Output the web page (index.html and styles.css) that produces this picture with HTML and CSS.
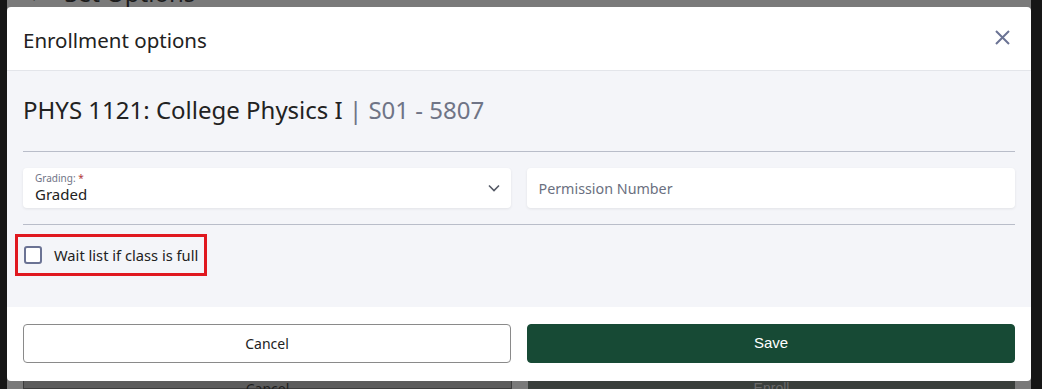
FILE: index.html
```html
<!DOCTYPE html>
<html lang="en">
<head>
    <meta charset="UTF-8">
    <meta name="viewport" content="width=device-width, initial-scale=1.0">
    <title>Enrollment options</title>
    <link rel="stylesheet" href="styles.css">
</head>
<body>

    <div class="backdrop">
        <div class="back-header">
            <span class="back-arrow">&lsaquo;</span>
            <span class="back-title">Set Options</span>
            <span class="back-close">&times;</span>
        </div>
        <div class="back-footer">
            <div class="back-btn back-cancel">Cancel</div>
            <div class="back-btn back-enroll">Enroll</div>
        </div>

        <div class="modal">
            <div class="modal-header">
                <h2>Enrollment options</h2>
                <button class="close-btn" aria-label="Close">
                    <svg width="15" height="15" viewBox="0 0 15 15">
                        <path d="M1 1 L14 14 M14 1 L1 14" stroke="#6b7394" stroke-width="2" fill="none" />
                    </svg>
                </button>
            </div>

            <div class="modal-body">
                <h3 class="course">PHYS 1121: College Physics I <span class="section">| S01 - 5807</span></h3>
                <hr class="divider">

                <div class="fields">
                    <div class="field select-field">
                        <div class="field-text">
                            <label class="field-label">Grading: <span class="req">*</span></label>
                            <div class="field-value">Graded</div>
                        </div>
                        <svg class="chevron" width="12" height="8" viewBox="0 0 12 8">
                            <polyline points="1,1.5 6,6.5 11,1.5" stroke="#555a66" stroke-width="1.6" fill="none" />
                        </svg>
                    </div>
                    <div class="field input-field">
                        <span class="placeholder">Permission Number</span>
                    </div>
                </div>

                <hr class="divider">

                <div class="waitlist">
                    <span class="checkbox"></span>
                    <span class="waitlist-label">Wait list if class is full</span>
                </div>
            </div>

            <div class="modal-footer">
                <button class="btn btn-cancel">Cancel</button>
                <button class="btn btn-save">Save</button>
            </div>
        </div>
    </div>

</body>
</html>
```

FILE: styles.css
```css
* {
    margin: 0;
    padding: 0;
    box-sizing: border-box;
}

body {
    font-family: "Noto Sans", Arial, sans-serif;
    background-color: #161616;
    height: 389px;
    overflow: hidden;
    color: #222;
}

.backdrop {
    position: relative;
    margin-left: 7px;
    width: 1024px;
    height: 389px;
    background-color: #7a7a7a;
    display: flex;
    flex-direction: column;
    justify-content: space-between;
}

.back-header {
    display: flex;
    align-items: center;
    height: 7px;
    overflow: hidden;
    color: #1c1c1c;
    font-size: 24px;
    padding: 0 16px;
}

.back-header span {
    margin-top: -22px;
}

.back-arrow {
    margin-left: 6px;
}

.back-title {
    margin-left: 28px;
}

.back-close {
    margin-left: auto;
    margin-right: 8px;
}

.back-footer {
    display: flex;
    gap: 16px;
    height: 8px;
    padding: 0 16px;
    overflow: hidden;
}

.back-btn {
    flex: 1;
    text-align: center;
    font-size: 14px;
    line-height: 22px;
    margin-top: -4px;
}

.back-cancel {
    background-color: #5c5c5c;
    border: 1px solid #3c3c3c;
    color: #1c1c1c;
}

.back-enroll {
    background-color: #3a3f3c;
    color: #6a6a6a;
    font-family: "Liberation Sans", Arial, sans-serif;
}

.modal {
    position: absolute;
    top: 7px;
    left: 0;
    width: 1024px;
    height: 374px;
    background-color: white;
    border-radius: 4px;
    overflow: hidden;
    display: flex;
    flex-direction: column;
}

.modal-header {
    display: flex;
    align-items: center;
    justify-content: space-between;
    height: 64px;
    padding: 0 21px 2px 16px;
    border-bottom: 1px solid #e3e5ea;
}

.modal-header h2 {
    font-size: 20.5px;
    font-weight: 400;
    color: #222;
    padding-top: 4px;
}

.close-btn {
    border: none;
    background: none;
    display: flex;
    cursor: pointer;
}

.modal-body {
    background-color: #f4f5f9;
    height: 236px;
    padding: 23px 16px 0 16px;
}

.course {
    font-size: 24px;
    font-weight: 400;
    line-height: 32px;
    color: #222;
}

.section {
    color: #6f7486;
}

.divider {
    border: none;
    border-top: 1px solid #b9bdc9;
    margin-top: 25px;
}

.fields + .divider {
    margin-top: 16px;
}

.fields {
    display: flex;
    gap: 16px;
    margin-top: 16px;
}

.field {
    flex: 1;
    height: 40px;
    background-color: white;
    border-radius: 4px;
    box-shadow: 0 1px 3px rgba(0, 0, 0, 0.08);
    display: flex;
    align-items: center;
}

.select-field {
    padding: 0 11px 0 12px;
    justify-content: space-between;
}

.field-text {
    display: flex;
    flex-direction: column;
    padding-top: 1px;
}

.field-label {
    font-size: 10px;
    line-height: 12px;
    color: #6f7486;
}

.req {
    color: #b0373a;
}

.field-value {
    font-size: 15px;
    line-height: 21px;
}

.chevron {
    margin-top: -1px;
}

.input-field {
    padding: 0 12px;
}

.placeholder {
    font-size: 14.3px;
    color: #6b7080;
}

.waitlist {
    display: inline-flex;
    align-items: center;
    gap: 12px;
    margin: 9px 0 0 -8px;
    height: 42px;
    padding: 0 6px;
    border: 3px solid #e0181f;
}

.checkbox {
    width: 18px;
    height: 18px;
    border: 2px solid #6b7394;
    border-radius: 3px;
    background-color: white;
}

.waitlist-label {
    font-size: 14.7px;
    color: #222;
}

.modal-footer {
    display: flex;
    gap: 16px;
    padding: 17px 16px 0 16px;
}

.btn {
    flex: 1;
    height: 39px;
    border-radius: 4px;
    font-size: 14px;
    cursor: pointer;
}

.btn-cancel {
    background-color: white;
    border: 1px solid #8a8a8a;
    font-family: "Noto Sans", Arial, sans-serif;
    color: #222;
}

.btn-save {
    background-color: #174a35;
    border: 1px solid #174a35;
    color: white;
    font-family: "Liberation Sans", Arial, sans-serif;
    font-size: 15px;
    padding-bottom: 2px;
}
```
